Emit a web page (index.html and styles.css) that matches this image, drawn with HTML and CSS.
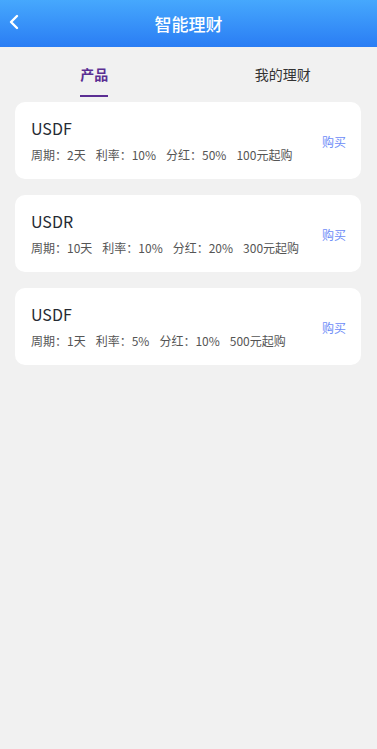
FILE: index.html
```html
<!DOCTYPE html>
<html lang="zh">
<head>
<meta charset="utf-8">
<meta name="viewport" content="width=device-width, initial-scale=1">
<link rel="stylesheet" href="styles.css">
</head>
<body>
<header class="nav">
  <span class="back">
    <svg width="12" height="16" viewBox="0 0 12 16"><path d="M9 2 L3 8 L9 14" fill="none" stroke="#fff" stroke-width="2.4" stroke-linecap="round" stroke-linejoin="round"/></svg>
  </span>
  <h1 class="title">智能理财</h1>
</header>
<nav class="tabs">
  <div class="tab active"><span>产品</span></div>
  <div class="tab"><span>我的理财</span></div>
</nav>
<main class="list">
  <div class="card">
    <div class="info">
      <div class="name">USDF</div>
      <div class="meta"><span>周期：2天</span><span>利率：10%</span><span>分红：50%</span><span>100元起购</span></div>
    </div>
    <div class="buy">购买</div>
  </div>
  <div class="card">
    <div class="info">
      <div class="name">USDR</div>
      <div class="meta"><span>周期：10天</span><span>利率：10%</span><span>分红：20%</span><span>300元起购</span></div>
    </div>
    <div class="buy">购买</div>
  </div>
  <div class="card">
    <div class="info">
      <div class="name">USDF</div>
      <div class="meta"><span>周期：1天</span><span>利率：5%</span><span>分红：10%</span><span>500元起购</span></div>
    </div>
    <div class="buy">购买</div>
  </div>
</main>
</body>
</html>
```
FILE: styles.css
```css
* { box-sizing: border-box; }
html, body { margin: 0; padding: 0; }
body {
  background: #f1f1f1;
  font-family: "Noto Sans CJK SC", "Noto Sans", sans-serif;
  min-height: 749px;
}
.nav {
  height: 47px;
  background: linear-gradient(180deg, #46a8fd 0%, #2a7df4 100%);
  display: flex;
  align-items: center;
  justify-content: center;
  position: relative;
}
.back {
  position: absolute;
  left: 8px;
  top: 14px;
  display: flex;
}
.title {
  margin: 0;
  color: #fff;
  font-size: 17px;
  font-weight: 500;
  line-height: 47px;
}
.tabs {
  display: flex;
  height: 55px;
}
.tab {
  flex: 1;
  display: flex;
  justify-content: center;
  padding-top: 15px;
  font-size: 14px;
  color: #333;
}
.tab span {
  height: 35px;
  line-height: 24px;
}
.tab.active span {
  color: #5b2e93;
  font-weight: 700;
  border-bottom: 2px solid #5b2e93;
}
.list {
  padding: 0 16px 0 15px;
  display: flex;
  flex-direction: column;
  gap: 16px;
}
.card {
  background: #fff;
  border-radius: 10px;
  height: 77px;
  display: flex;
  align-items: center;
  padding: 0 15px 0 16px;
}
.info { flex: 1; }
.name {
  font-size: 16px;
  color: #262a33;
  line-height: 22px;
}
.meta {
  margin-top: 7px;
  font-size: 12px;
  color: #555;
  line-height: 18px;
  display: flex;
  gap: 10px;
}
.buy {
  font-size: 12px;
  color: #6d8cf7;
  margin-top: 2px;
}
```
